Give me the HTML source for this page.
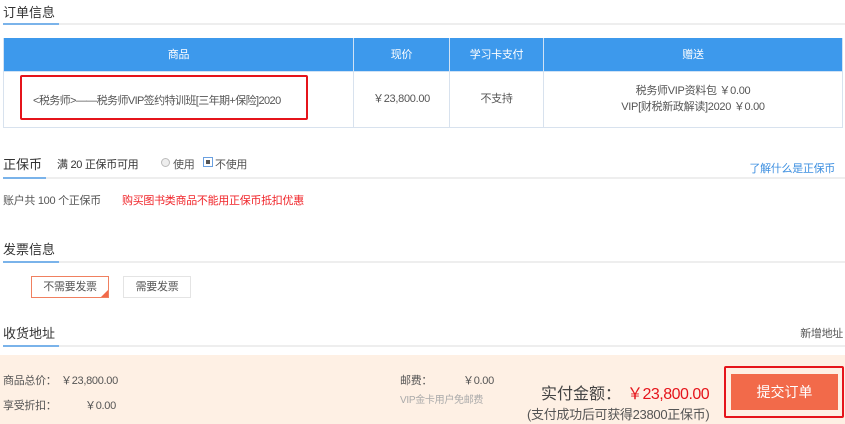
<!DOCTYPE html>
<html><head><meta charset="utf-8"><style>
*{margin:0;padding:0;box-sizing:border-box}
body{width:845px;height:424px;overflow:hidden;background:#fff;font-family:"Liberation Sans","Noto Sans CJK SC",sans-serif;color:#555;font-size:11px;letter-spacing:-0.3px;position:relative}
.a{position:absolute;white-space:nowrap}
.t{font-size:13px;color:#333;letter-spacing:0}
.ln{position:absolute;height:2px;background:#eee;left:3px;right:0}
.ul{position:absolute;height:2px;background:#7ab3ea;left:3px}
table{position:absolute;left:3px;top:38px;width:840px;border-collapse:collapse}
th{background:#3d99ec;color:#fff;font-weight:normal;height:33px;border:1px solid #d0e2f5;border-top:none;font-size:11px}
td{height:56px;border:1px solid #d8e2ee;text-align:center;color:#555;font-size:11px;line-height:16px}
</style></head><body>
<div class="a t" style="left:3px;top:2px">订单信息</div>
<div class="ln" style="top:23px"></div><div class="ul" style="top:23px;width:56px"></div>
<table><tr><th style="width:350px">商品</th><th style="width:96px">现价</th><th style="width:94px">学习卡支付</th><th>赠送</th></tr>
<tr><td></td><td>￥23,800.00</td><td>不支持</td><td>税务师VIP资料包 ￥0.00<br>VIP[财税新政解读]2020 ￥0.00</td></tr></table>
<div class="a" style="left:20px;top:75px;width:288px;height:45px;border:2px solid #e5141b;border-radius:2px"></div>
<div class="a" style="left:33px;top:92px;color:#555;letter-spacing:-0.6px">&lt;税务师&gt;——税务师VIP签约特训班[三年期+保险]2020</div>
<div class="a t" style="left:3px;top:154px">正保币</div>
<div class="a" style="left:57px;top:156px;color:#333">满 20 正保币可用</div>
<div class="a" style="left:161px;top:158px;width:9px;height:9px;border:1px solid #bbb;border-radius:50%;background:#eee"></div>
<div class="a" style="left:173px;top:156px">使用</div>
<div class="a" style="left:203px;top:157px;width:10px;height:10px;border:1px solid #6aa0e0;background:#fff"><div style="margin:2px;width:4px;height:4px;background:#555"></div></div>
<div class="a" style="left:215px;top:156px">不使用</div>
<div class="a" style="right:10px;top:160px;color:#3d8fe0">了解什么是正保币</div>
<div class="ln" style="top:177px"></div><div class="ul" style="top:177px;width:43px"></div>
<div class="a" style="left:3px;top:192px">账户共 100 个正保币</div>
<div class="a" style="left:122px;top:192px;color:#f0252a">购买图书类商品不能用正保币抵扣优惠</div>
<div class="a t" style="left:3px;top:239px">发票信息</div>
<div class="ln" style="top:261px"></div><div class="ul" style="top:261px;width:56px"></div>
<div class="a" style="left:31px;top:276px;width:78px;height:22px;border:1px solid #f08060;text-align:center;line-height:20px;color:#555">不需要发票<div style="position:absolute;right:0;bottom:0;width:0;height:0;border-left:7px solid transparent;border-bottom:7px solid #f26a4a"></div></div>
<div class="a" style="left:123px;top:276px;width:68px;height:22px;border:1px solid #e4e4e4;text-align:center;line-height:20px;color:#555">需要发票</div>
<div class="a t" style="left:3px;top:323px">收货地址</div>
<div class="a" style="right:2px;top:325px;color:#555">新增地址</div>
<div class="ln" style="top:345px"></div><div class="ul" style="top:345px;width:56px"></div>
<div class="a" style="left:0;top:355px;width:845px;height:69px;background:#fef0e4"></div>
<div class="a" style="left:3px;top:372px">商品总价：</div><div class="a" style="left:61px;top:372px">￥23,800.00</div>
<div class="a" style="left:3px;top:397px">享受折扣：</div><div class="a" style="left:85px;top:397px">￥0.00</div>
<div class="a" style="left:400px;top:372px">邮费：</div><div class="a" style="left:463px;top:372px">￥0.00</div>
<div class="a" style="left:400px;top:391px;color:#aaa;font-size:10px">VIP金卡用户免邮费</div>
<div class="a" style="left:541px;top:380px;font-size:16px;color:#444;letter-spacing:0">实付金额：</div>
<div class="a" style="left:627px;top:380px;font-size:16px;color:#e5141b;letter-spacing:-0.5px">￥23,800.00</div>
<div class="a" style="left:527px;top:404px;font-size:13px;color:#555">(支付成功后可获得23800正保币)</div>
<div class="a" style="left:724px;top:366px;width:120px;height:52px;border:2px solid #e5141b;border-radius:2px"></div>
<div class="a" style="left:731px;top:374px;width:107px;height:36px;background:#f26a4a;color:#fff;font-size:14px;text-align:center;line-height:36px;letter-spacing:0">提交订单</div>
</body></html>
